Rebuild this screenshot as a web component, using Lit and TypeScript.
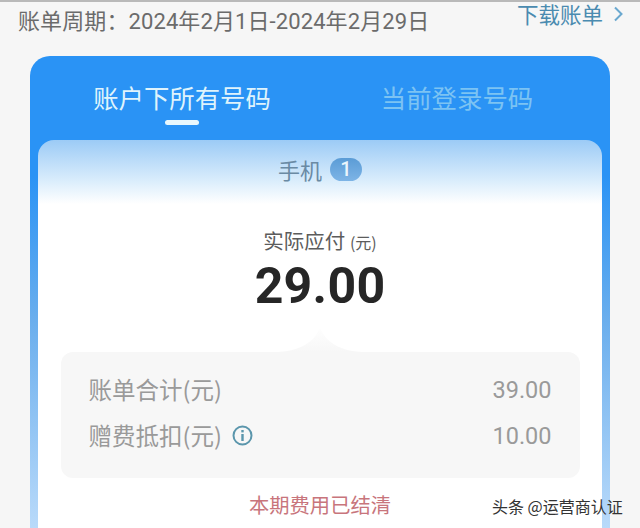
import { LitElement, html, css } from "lit";
import { customElement } from "lit/decorators.js";

@customElement("app-root")
export class AppRoot extends LitElement {
  static styles = css`
    :host { display: block; width: 640px; height: 528px; overflow: hidden; background: #f6f6f6; border-top: 2px solid #b9b9b9; box-sizing: border-box; font-family: "Noto Sans CJK SC", Roboto, sans-serif; position: relative; }
    .head { display: flex; justify-content: space-between; align-items: flex-start; height: 54px; padding: 0 17px 0 18px; }
    .period { font-size: 22px; letter-spacing: 0.1px; line-height: 28px; margin-top: 6px; color: #6b6b6b; font-family: Roboto, "Noto Sans CJK SC", sans-serif; font-weight: 400; white-space: nowrap; }
    .dl { display: flex; align-items: center; gap: 11px; font-size: 21.500px; line-height: 24px; color: #4a8bb0; font-weight: 400; }
    .card { margin: 0 30px; height: 480px; border-radius: 20px 20px 0 0; padding: 0 8px; background: linear-gradient(180deg, #2a93f5 0, #2a93f5 120px, #6aaeed 264px, #b9dafa 472px); }
    .tabs { display: grid; grid-template-columns: 288px 1fr; height: 84px; }
    .tab { display: flex; flex-direction: column; align-items: center; font-size: 25.400px; line-height: 36px; padding-top: 23px; font-weight: 400; color: #dff3fc; white-space: nowrap; }
    .tab.off { color: #7cc3f3; padding-right: 14px; }
    .bar { width: 34px; height: 5px; border-radius: 3px; background: #e8f7fd; margin-top: 5px; }
    .inner { height: 400px; border-radius: 16px 16px 0 0; background: linear-gradient(180deg, #9ccbf6 0, #dceefc 42px, #fff 64px); display: flex; flex-direction: column; align-items: center; position: relative; }
    .phone { display: flex; align-items: center; gap: 8px; height: 60px; margin-top: -1px; font-size: 22px; color: #6a8aa4; font-weight: 400; }
    .badge { width: 32px; height: 23px; border-radius: 12px; background: linear-gradient(180deg, #5b9cd6, #7db4e6); color: #e9f5fc; font-size: 20px; font-weight: 500; display: flex; align-items: center; justify-content: center; font-family: Roboto, sans-serif; }
    .label { margin-top: 27px; font-size: 20.500px; line-height: 28px; color: #5c5c5c; font-weight: 400; white-space: nowrap; }
    .label span { font-size: 16px; }
    .amount { font-family: Roboto, sans-serif; font-weight: 700; font-size: 50px; line-height: 60px; color: #262626; letter-spacing: 0.3px; }
    .panel { position: relative; width: 519px; height: 126px; box-sizing: border-box; margin-top: 36px; padding: 14px 28px 0 28px; border-radius: 12px; background: #f7f7f7; }
    .notch { position: absolute; left: 213px; top: -24px; width: 92px; height: 24px; }
    .row { display: flex; justify-content: space-between; align-items: center; height: 46px; font-size: 23.500px; color: #9a9a9a; font-weight: 400; }
    .name { display: flex; align-items: center; gap: 10px; }
    .val { font-family: Roboto, sans-serif; font-size: 23.500px; font-weight: 400; padding-top: 2px; }
    .paid { margin-top: 13px; font-size: 20.300px; line-height: 26px; color: #c8757c; font-weight: 400; }
    .mark { position: absolute; left: 492px; top: 492px; font-size: 16px; line-height: 24px; color: #333; white-space: nowrap; }
  `;

  render() {
    return html`
      <div class="head">
        <div class="period">账单周期：2024年2月1日-2024年2月29日</div>
        <div class="dl">下载账单
          <svg width="9" height="16" viewBox="0 0 9 16" fill="none" stroke="#6aa8cf" stroke-width="2"><path d="M1 1.500 7.500 8 1 14.500"/></svg>
        </div>
      </div>
      <div class="card">
        <div class="tabs">
          <div class="tab">账户下所有号码<div class="bar"></div></div>
          <div class="tab off">当前登录号码</div>
        </div>
        <div class="inner">
          <div class="phone">手机<div class="badge">1</div></div>
          <div class="label">实际应付 <span>(元)</span></div>
          <div class="amount">29.00</div>
          <div class="panel">
            <svg class="notch" viewBox="0 0 92 24">
              <defs><linearGradient id="n" x1="0" y1="1" x2="0" y2="0"><stop offset="0" stop-color="#f7f7f7"/><stop offset="1" stop-color="#fefefe"/></linearGradient></defs>
              <path d="M0 24C26 24 40 14 46 0C52 14 66 24 92 24Z" fill="url(#n)"/>
            </svg>
            <div class="row"><div class="name">账单合计(元)</div><div class="val">39.00</div></div>
            <div class="row"><div class="name">赠费抵扣(元)
              <svg width="21" height="21" viewBox="0 0 21 21"><circle cx="10.500" cy="10.500" r="9" fill="none" stroke="#5b96ac" stroke-width="2"/><rect x="9.300" y="9" width="2.400" height="7" fill="#5b96ac"/><rect x="9.300" y="5" width="2.400" height="2.400" fill="#5b96ac"/></svg>
            </div><div class="val">10.00</div></div>
          </div>
          <div class="paid">本期费用已结清</div>
        </div>
      </div>
      <div class="mark">头条 @运营商认证</div>
    `;
  }
}
